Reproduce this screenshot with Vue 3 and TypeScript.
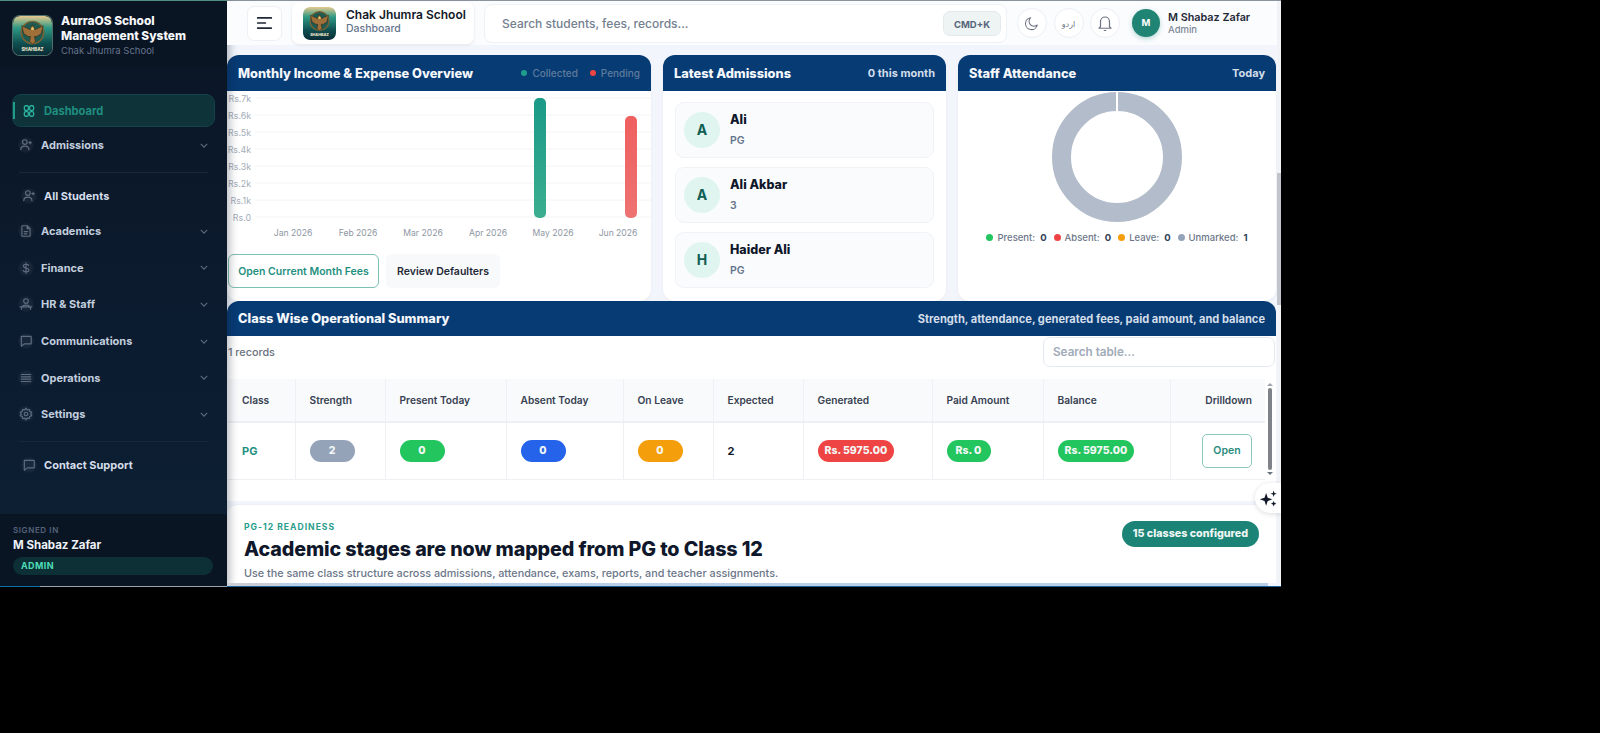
<script setup lang="ts">
interface NavItem {
  label: string
  icon: string
  sub?: boolean
  caret?: boolean
  divider?: boolean
}

const icons: Record<string, string> = {
  user: 'M10 11a4 4 0 1 0 0-8 4 4 0 0 0 0 8zM3 20c0-4 3-6 7-6s7 2 7 6M19 6v4M17 8h4',
  doc: 'M6 3h8l5 5v12a1 1 0 0 1-1 1H6a1 1 0 0 1-1-1V4a1 1 0 0 1 1-1zM14 3v5h5M9 13h6M9 17h4',
  dollar: 'M12 3v18M16.5 7.5c-.8-1.5-2.4-2-4.5-2-2.500 0-4.500 1.200-4.500 3.200 0 4.600 9.500 2.300 9.500 6.800 0 2-2.200 3.200-5 3.200-2.400 0-4.300-.8-5-2.500',
  staff: 'M12 11a4 4 0 1 0 0-8 4 4 0 0 0 0 8zM4 21c0-4 3-7 8-7s8 3 8 7M2 17h20',
  chat: 'M4 4h16a1 1 0 0 1 1 1v11a1 1 0 0 1-1 1H9l-5 4V5a1 1 0 0 1 0-1z',
  menu: 'M4 6h16M4 10h16M4 14h16M4 18h16',
  gear: 'M12 15a3 3 0 1 0 0-6 3 3 0 0 0 0 6zM12 2l2 3 3.500-.8 1 3.500 3.200 1.500-1.500 2.800 1.500 2.800-3.200 1.500-1 3.500L14 19l-2 3-2-3-3.500.8-1-3.500-3.200-1.500 1.500-2.800-1.500-2.800 3.200-1.500 1-3.500L10 5z',
}

const navItems: NavItem[] = [
  { label: 'Admissions', icon: 'user', caret: true, divider: true },
  { label: 'All Students', icon: 'user', sub: true },
  { label: 'Academics', icon: 'doc', caret: true },
  { label: 'Finance', icon: 'dollar', caret: true },
  { label: 'HR & Staff', icon: 'staff', caret: true },
  { label: 'Communications', icon: 'chat', caret: true },
  { label: 'Operations', icon: 'menu', caret: true },
  { label: 'Settings', icon: 'gear', caret: true, divider: true },
  { label: 'Contact Support', icon: 'chat', sub: true },
]

const yTicks = ['Rs.7k', 'Rs.6k', 'Rs.5k', 'Rs.4k', 'Rs.3k', 'Rs.2k', 'Rs.1k', 'Rs.0']
const months = ['Jan 2026', 'Feb 2026', 'Mar 2026', 'Apr 2026', 'May 2026', 'Jun 2026']

const admissions = [
  { initial: 'A', name: 'Ali', grade: 'PG' },
  { initial: 'A', name: 'Ali Akbar', grade: '3' },
  { initial: 'H', name: 'Haider Ali', grade: 'PG' },
]

const legend = [
  { label: 'Present:', value: 0, color: '#22c55e' },
  { label: 'Absent:', value: 0, color: '#ef4444' },
  { label: 'Leave:', value: 0, color: '#f59e0b' },
  { label: 'Unmarked:', value: 1, color: '#94a3b8' },
]

const columns = ['Class', 'Strength', 'Present Today', 'Absent Today', 'On Leave', 'Expected', 'Generated', 'Paid Amount', 'Balance', 'Drilldown']
</script>

<template>
  <div class="app">
    <aside class="sidebar">
      <div class="brand">
        <svg class="logo logo--big" viewBox="0 0 40 40">
          <defs>
            <linearGradient id="logoBg" x1="0" y1="0" x2="0" y2="1">
              <stop offset="0" stop-color="#e6c98f" />
              <stop offset="0.3" stop-color="#2f9a84" />
              <stop offset="0.7" stop-color="#0f4f50" />
              <stop offset="1" stop-color="#0a2b35" />
            </linearGradient>
          </defs>
          <rect width="40" height="40" rx="7" fill="url(#logoBg)" />
          <circle cx="20" cy="17" r="11.500" fill="#1f5b50" stroke="#7a6234" stroke-width="1.500" />
          <path d="M20 9l2.500 5 8.500-4-2 8-4.500 3-2.500 0 1 5-3 3-3-3 1-5-2.500 0-4.500-3-2-8 8.500 4z" fill="#a0703a" stroke="#3a2d1c" stroke-width=".7" />
          <circle cx="20" cy="13" r="1.500" fill="#e8c56a" />
          <text x="20" y="35.500" text-anchor="middle" class="logo-text">SHAHBAZ</text>
        </svg>
        <div class="brand-text">
          <div class="brand-title">AurraOS School<br />Management System</div>
          <div class="brand-sub">Chak Jhumra School</div>
        </div>
      </div>

      <nav class="nav">
        <a class="nav-active">
          <svg class="ic-active" viewBox="0 0 24 24" fill="none" stroke="currentColor" stroke-width="2.200">
            <rect x="4" y="3" width="7" height="8" rx="2.500" />
            <rect x="13" y="3" width="7" height="8" rx="2.500" />
            <rect x="4" y="13" width="7" height="8" rx="2.500" />
            <rect x="13" y="13" width="7" height="8" rx="2.500" />
          </svg>
          Dashboard
        </a>
        <template v-for="item in navItems" :key="item.label">
          <a :class="['nav-item', { 'nav-item--sub': item.sub }]">
            <span class="nav-ic">
              <svg viewBox="0 0 24 24" fill="none" stroke="currentColor" stroke-width="2" stroke-linecap="round" stroke-linejoin="round">
                <path :d="icons[item.icon]" />
              </svg>
            </span>
            <span class="nav-label">{{ item.label }}</span>
            <svg v-if="item.caret" class="caret" viewBox="0 0 10 6" fill="none" stroke="currentColor" stroke-width="1.400">
              <path d="M1 1l4 4 4-4" />
            </svg>
          </a>
          <div v-if="item.divider" class="nav-divider"></div>
        </template>
      </nav>

      <div class="signed">
        <div class="signed-cap">SIGNED IN</div>
        <div class="signed-name">M Shabaz Zafar</div>
        <div class="signed-role">ADMIN</div>
      </div>
    </aside>

    <div class="main">
      <header class="topbar">
        <button class="menu-btn">
          <svg viewBox="0 0 20 16" width="17" height="14" fill="none" stroke="#1f2937" stroke-width="2" stroke-linecap="round">
            <path d="M2 2h16M2 8h9M2 14h16" />
          </svg>
        </button>
        <div class="school">
          <svg class="logo logo--small" viewBox="0 0 40 40">
            <rect width="40" height="40" rx="7" fill="url(#logoBg)" />
            <circle cx="20" cy="17" r="11.500" fill="#1f5b50" stroke="#7a6234" stroke-width="1.500" />
            <path d="M20 9l2.500 5 8.500-4-2 8-4.500 3-2.500 0 1 5-3 3-3-3 1-5-2.500 0-4.500-3-2-8 8.500 4z" fill="#a0703a" stroke="#3a2d1c" stroke-width=".7" />
            <circle cx="20" cy="13" r="1.500" fill="#e8c56a" />
            <text x="20" y="35.500" text-anchor="middle" class="logo-text">SHAHBAZ</text>
          </svg>
          <div class="school-text">
            <div class="school-name">Chak Jhumra School</div>
            <div class="school-page">Dashboard</div>
          </div>
        </div>
        <div class="search">
          <span class="search-ph">Search students, fees, records...</span>
          <span class="kbd">CMD+K</span>
        </div>
        <button class="round">
          <svg viewBox="0 0 24 24" width="16" height="16" fill="none" stroke="#6b7280" stroke-width="1.600" stroke-linecap="round" stroke-linejoin="round">
            <path d="M20 15A9 9 0 1 1 10 4a7 7 0 0 0 10 11z" />
          </svg>
        </button>
        <button class="round round--lang">اردو</button>
        <button class="round">
          <svg viewBox="0 0 24 24" width="18" height="18" fill="none" stroke="#6b7280" stroke-width="1.600" stroke-linecap="round" stroke-linejoin="round">
            <path d="M6 17V10a6 6 0 0 1 12 0v7l2 2H4zM11 22h2" />
          </svg>
        </button>
        <div class="avatar">M</div>
        <div class="who">
          <div class="who-name">M Shabaz Zafar</div>
          <div class="who-role">Admin</div>
        </div>
      </header>

      <div class="content">
        <section class="top-grid">
          <div class="card">
            <div class="card-head card-head--tall">
              <span class="card-title">Monthly Income &amp; Expense Overview</span>
              <span class="chart-legend">
                <i class="dot dot--teal"></i><span>Collected</span>
                <i class="dot dot--red"></i><span>Pending</span>
              </span>
            </div>
            <svg class="chart" width="424" height="157" viewBox="0 0 424 157">
              <defs>
                <linearGradient id="barA" x1="0" y1="0" x2="0" y2="1">
                  <stop offset="0" stop-color="#1a9a88" />
                  <stop offset="1" stop-color="#3bae90" />
                </linearGradient>
                <linearGradient id="barB" x1="0" y1="0" x2="0" y2="1">
                  <stop offset="0" stop-color="#ef5f5f" />
                  <stop offset="1" stop-color="#ee7272" />
                </linearGradient>
              </defs>
              <g v-for="(tick, i) in yTicks" :key="tick">
                <line x1="28" x2="424" :y1="7 + i * 17" :y2="7 + i * 17" stroke="#f2f4f7" />
                <text x="24" :y="10.500 + i * 17" text-anchor="end" class="tick">{{ tick }}</text>
              </g>
              <text v-for="(month, i) in months" :key="month" :x="66 + i * 65" y="145" text-anchor="middle" class="tick tick--x">{{ month }}</text>
              <rect x="307" y="7" width="12" height="120" rx="5" fill="url(#barA)" />
              <rect x="398" y="25" width="12" height="102" rx="5" fill="url(#barB)" />
            </svg>
            <div class="chart-actions">
              <button class="btn btn--outline">Open Current Month Fees</button>
              <button class="btn btn--soft">Review Defaulters</button>
            </div>
          </div>

          <div class="card">
            <div class="card-head card-head--tall">
              <span class="card-title">Latest Admissions</span>
              <span class="card-note">0 this month</span>
            </div>
            <div class="adm-list">
              <div v-for="row in admissions" :key="row.name" class="adm-row">
                <div class="adm-avatar">{{ row.initial }}</div>
                <div>
                  <div class="adm-name">{{ row.name }}</div>
                  <div class="adm-grade">{{ row.grade }}</div>
                </div>
              </div>
            </div>
          </div>

          <div class="card">
            <div class="card-head card-head--tall">
              <span class="card-title">Staff Attendance</span>
              <span class="card-note">Today</span>
            </div>
            <div class="donut-wrap">
              <svg width="132" height="132" viewBox="0 0 132 132">
                <circle cx="66" cy="66" r="55.500" fill="none" stroke="#b3bccb" stroke-width="19" />
                <rect x="65" y="0" width="2" height="22" fill="#fff" />
              </svg>
            </div>
            <div class="att-legend">
              <span v-for="entry in legend" :key="entry.label" class="att-item">
                <i class="att-dot" :style="{ background: entry.color }"></i>
                <span>{{ entry.label }}</span>
                <b>{{ entry.value }}</b>
              </span>
            </div>
          </div>
        </section>

        <section class="summary">
          <div class="card-head card-head--wide">
            <span class="card-title">Class Wise Operational Summary</span>
            <span class="card-note card-note--long">Strength, attendance, generated fees, paid amount, and balance</span>
          </div>
          <div class="tools">
            <span class="records">1 records</span>
            <div class="tbl-search">Search table...</div>
          </div>
          <div class="table-wrap">
            <table class="table">
              <colgroup>
                <col style="width: 67px" />
                <col style="width: 90px" />
                <col style="width: 121px" />
                <col style="width: 117px" />
                <col style="width: 90px" />
                <col style="width: 90px" />
                <col style="width: 129px" />
                <col style="width: 111px" />
                <col style="width: 127px" />
                <col style="width: 95px" />
              </colgroup>
              <thead>
                <tr>
                  <th v-for="col in columns" :key="col">{{ col }}</th>
                </tr>
              </thead>
              <tbody>
                <tr>
                  <td class="cls">PG</td>
                  <td><span class="pill pill--count pill--slate">2</span></td>
                  <td><span class="pill pill--count pill--green">0</span></td>
                  <td><span class="pill pill--count pill--blue">0</span></td>
                  <td><span class="pill pill--count pill--amber">0</span></td>
                  <td class="num">2</td>
                  <td><span class="pill pill--red">Rs. 5975.00</span></td>
                  <td><span class="pill pill--green">Rs. 0</span></td>
                  <td><span class="pill pill--green">Rs. 5975.00</span></td>
                  <td class="drill"><button class="open-btn">Open</button></td>
                </tr>
              </tbody>
            </table>
            <div class="tbl-scroll">
              <i class="arrow arrow--up"></i>
              <i class="thumb"></i>
              <i class="arrow arrow--down"></i>
            </div>
          </div>
        </section>

        <section class="banner">
          <div>
            <div class="eyebrow">PG-12 READINESS</div>
            <h2 class="banner-title">Academic stages are now mapped from PG to Class 12</h2>
            <p class="banner-sub">Use the same class structure across admissions, attendance, exams, reports, and teacher assignments.</p>
          </div>
          <span class="banner-pill">15 classes configured</span>
        </section>
      </div>

      <button class="ai-btn">
        <svg viewBox="0 0 24 24" width="19" height="19" fill="#111827">
          <path d="M9 5l2 6 6 2-6 2-2 6-2-6-6-2 6-2zM18.500 2l1 3 3 1-3 1-1 3-1-3-3-1 3-1zM18.500 15l1 2.500 2.500 1-2.500 1-1 2.500-1-2.500-2.500-1 2.500-1z" />
        </svg>
      </button>
      <div class="page-scroll"><i></i></div>
      <div class="bottom-bar"></div>
    </div>
  </div>
</template>

<style>
html,
body {
  margin: 0;
  background: #000;
}
</style>

<style scoped>
.app {
  display: flex;
  width: 1281px;
  height: 587px;
  overflow: hidden;
  position: relative;
  font-family: Inter, "Noto Sans", sans-serif;
  color: #111827;
}

/* sidebar */
.sidebar {
  width: 227px;
  flex: none;
  display: flex;
  flex-direction: column;
  background: linear-gradient(180deg, #0a1524 0%, #0c1c30 60%, #0c2034 100%);
  border-top: 1px solid #4f8f84;
  box-sizing: border-box;
  box-shadow: 3px 0 8px rgba(15, 23, 42, 0.28);
  position: relative;
  z-index: 1;
}

.sidebar::after {
  content: "";
  height: 1px;
  background: linear-gradient(90deg, #0e6fb0 40px, #9aa5b0 40px);
}

.brand {
  display: flex;
  gap: 9px;
  height: 67px;
  padding: 15px 13px 0;
  box-sizing: border-box;
  background: #0a1524;
}

.logo {
  flex: none;
  border-radius: 7px;
}

.logo--big {
  width: 39px;
  height: 39px;
  box-shadow: 0 0 0 1px #50706c;
}

.logo--small {
  width: 33px;
  height: 33px;
}

.logo-text {
  font-size: 4.500px;
  font-weight: 800;
  fill: #f2e6c8;
}

.brand-text {
  margin-top: -3px;
}

.brand-title {
  font-size: 11.900px;
  line-height: 15px;
  font-weight: 800;
  color: #f5f7fa;
}

.brand-sub {
  margin-top: 1px;
  font-size: 9.500px;
  line-height: 13px;
  color: #65748a;
}

.nav {
  padding: 26px 12px 0;
  flex: 1;
}

.nav-active {
  display: flex;
  align-items: center;
  height: 33px;
  gap: 8px;
  padding-left: 9px;
  box-sizing: border-box;
  border-radius: 9px;
  background: #0e3338;
  border: 1px solid #14444a;
  font-size: 11.100px;
  font-weight: 700;
  color: #1f8f80;
  position: relative;
}

.nav-active::before {
  content: "";
  position: absolute;
  left: 0;
  top: 7px;
  bottom: 7px;
  width: 2px;
  background: #1f9d8a;
}

.ic-active {
  width: 14px;
  height: 14px;
  color: #2bb5a0;
}

.nav-item {
  display: flex;
  align-items: center;
  height: 36.700px;
  padding-left: 7px;
  font-size: 11px;
  font-weight: 700;
  color: #c2cede;
}

.nav-item--sub {
  height: 34px;
  padding-left: 10px;
  color: #d5deea;
}

.nav-item--sub:last-child {
  margin-top: 2px;
}

.nav-ic {
  display: flex;
  align-items: center;
  justify-content: center;
  width: 14px;
  height: 14px;
  margin-right: 8px;
  color: #5d6c80;
  border-radius: 50%;
  background: rgba(255, 255, 255, 0.05);
  box-shadow: 0 0 0 1px rgba(255, 255, 255, 0.03);
}

.nav-ic svg {
  width: 14px;
  height: 14px;
}

.nav-label {
  flex: 1;
}

.caret {
  width: 8px;
  height: 5px;
  margin-right: 7px;
  color: #5c6b7e;
}

.nav-divider {
  height: 1px;
  margin: 8px 7px 6px;
  background: #15283c;
}

.signed {
  height: 72px;
  padding: 11px 13px 0;
  box-sizing: border-box;
  background: #0a1524;
}

.signed-cap {
  font-size: 8px;
  line-height: 11px;
  font-weight: 600;
  letter-spacing: 0.6px;
  color: #55637a;
}

.signed-name {
  font-size: 11.500px;
  line-height: 17px;
  font-weight: 700;
  color: #eef2f7;
  margin-top: 1px;
}

.signed-role {
  height: 18px;
  margin-top: 3px;
  padding-left: 8px;
  width: 200px;
  box-sizing: border-box;
  border-radius: 9px;
  background: #0c3035;
  font-size: 9px;
  line-height: 18px;
  font-weight: 700;
  letter-spacing: 0.4px;
  color: #4fdcb7;
}

/* main column */
.main {
  flex: 1;
  display: flex;
  flex-direction: column;
  min-width: 0;
  position: relative;
  background: #f2f6fc;
  border-top: 1px solid #8b949e;
  box-sizing: border-box;
}

.topbar {
  flex: none;
  height: 44px;
  display: flex;
  align-items: center;
  padding-left: 20px;
  box-sizing: border-box;
  background: #fbfcfe;
  position: relative;
  z-index: 2;
}

.menu-btn {
  width: 35px;
  height: 35px;
  flex: none;
  display: flex;
  align-items: center;
  justify-content: center;
  padding: 0;
  border: 1px solid #eef0f4;
  border-radius: 7px;
  background: #fff;
}

.school {
  display: flex;
  align-items: center;
  gap: 10px;
  width: 182px;
  height: 42px;
  flex: none;
  margin-left: 10px;
  padding-left: 11px;
  box-sizing: border-box;
  background: #fff;
  border-radius: 7px;
  box-shadow: 0 1px 3px rgba(15, 23, 42, 0.1);
}

.school-text {
  margin-top: -3px;
}

.school-name {
  font-size: 12px;
  line-height: 15px;
  font-weight: 600;
  color: #111827;
}

.school-page {
  font-size: 10.500px;
  line-height: 14px;
  font-weight: 500;
  color: #64748b;
}

.search {
  width: 523px;
  height: 39px;
  flex: none;
  margin-left: 10px;
  display: flex;
  align-items: center;
  justify-content: space-between;
  padding: 0 5px 0 17px;
  box-sizing: border-box;
  background: #fff;
  border: 1px solid #eef1f5;
  border-radius: 8px;
}

.search-ph {
  font-size: 12px;
  font-weight: 500;
  color: #74808f;
}

.kbd {
  width: 58px;
  height: 25px;
  text-align: center;
  font-size: 9.500px;
  line-height: 25px;
  font-weight: 700;
  color: #55657a;
  background: #eef3f4;
  border: 1px solid #e4eaec;
  box-sizing: border-box;
  border-radius: 7px;
}

.round {
  width: 30px;
  height: 30px;
  flex: none;
  margin-left: 6.500px;
  padding: 0;
  display: flex;
  align-items: center;
  justify-content: center;
  border: 1px solid #eceff3;
  border-radius: 50%;
  background: #fff;
}

.search + .round {
  margin-left: 10px;
}

.round--lang {
  font-family: "Noto Sans", "DejaVu Sans", sans-serif;
  font-size: 8px;
  color: #6b7280;
}

.avatar {
  width: 28px;
  height: 28px;
  flex: none;
  margin-left: 12px;
  border-radius: 50%;
  background: #1f8473;
  color: #fff;
  font-size: 9.500px;
  font-weight: 700;
  line-height: 28px;
  text-align: center;
  box-shadow: 0 2px 5px rgba(31, 132, 115, 0.3);
}

.who {
  margin-left: 8px;
}

.who-name {
  font-size: 10.800px;
  line-height: 13px;
  font-weight: 600;
  color: #1f2937;
}

.who-role {
  font-size: 9.500px;
  line-height: 12px;
  font-weight: 500;
  color: #7b8794;
}

.content {
  flex: 1;
  min-height: 0;
  padding: 10px 5px 0 0;
}

.top-grid {
  display: grid;
  grid-template-columns: 424px 283px 318px;
  gap: 12px;
  height: 246px;
}

.card {
  background: #fff;
  border-radius: 12px;
  overflow: hidden;
  box-shadow: 0 1px 3px rgba(15, 23, 42, 0.05);
}

.card-head {
  height: 35px;
  display: flex;
  align-items: center;
  justify-content: space-between;
  padding: 0 11px;
  background: #073b74;
  color: #fff;
}

.card-head--tall {
  height: 36px;
}

.card-head--wide {
  border-radius: 12px 12px 0 0;
}

.card-title {
  font-size: 12.800px;
  font-weight: 800;
  color: #f4f7fb;
}

.card-note {
  font-size: 11px;
  font-weight: 700;
  color: #d3deea;
}

.card-note--long {
  font-size: 11.100px;
}

.chart-legend {
  display: flex;
  align-items: center;
  font-size: 10px;
  font-weight: 500;
  color: #5f7c9c;
}

.dot {
  width: 6px;
  height: 6px;
  border-radius: 50%;
  margin-right: 5px;
}

.dot--teal {
  background: #1f9d8a;
}

.dot--red {
  margin-left: 12px;
  background: #ef4444;
}

.chart {
  display: block;
}

.tick {
  font-family: Inter, sans-serif;
  font-size: 8.800px;
  fill: #a3acb8;
}

.tick--x {
  font-size: 8.600px;
  fill: #8d96a3;
}

.chart-actions {
  display: flex;
  gap: 7px;
  padding: 6px 0 0 1px;
}

.btn {
  height: 34px;
  box-sizing: border-box;
  border-radius: 6px;
  font-family: inherit;
  font-size: 10.500px;
  font-weight: 600;
  padding: 0;
}

.btn--outline {
  width: 151px;
  background: #fff;
  border: 1px solid #7cbfb4;
  color: #1f8f80;
}

.btn--soft {
  width: 114px;
  background: #f8f9fb;
  border: 0;
  color: #1f2937;
}

.adm-list {
  display: flex;
  flex-direction: column;
  gap: 9px;
  padding: 11px 12px 0;
}

.adm-row {
  height: 56px;
  display: flex;
  align-items: center;
  gap: 10px;
  padding-left: 8px;
  box-sizing: border-box;
  background: #fafbfd;
  border: 1px solid #f0f2f6;
  border-radius: 9px;
}

.adm-avatar {
  width: 36px;
  height: 36px;
  border-radius: 50%;
  background: #e0f5f0;
  color: #0f5e54;
  font-size: 14px;
  font-weight: 700;
  line-height: 36px;
  text-align: center;
}

.adm-name {
  font-size: 12.500px;
  line-height: 21px;
  font-weight: 800;
  color: #0f172a;
}

.adm-grade {
  font-size: 10.500px;
  line-height: 21px;
  font-weight: 600;
  color: #64748b;
}

.donut-wrap {
  display: flex;
  justify-content: center;
}

.donut-wrap svg {
  display: block;
}

.att-legend {
  display: flex;
  justify-content: center;
  gap: 7px;
  margin-top: 9px;
  font-size: 9.500px;
  font-weight: 500;
  color: #6b7688;
}

.att-item {
  display: flex;
  align-items: center;
  gap: 3px;
}

.att-item b {
  margin-left: 2px;
  color: #334155;
  font-weight: 700;
}

.att-dot {
  width: 7px;
  height: 7px;
  border-radius: 50%;
  margin-right: 1px;
}

.summary {
  height: 200px;
  background: #fff;
  border-radius: 12px 12px 0 0;
}

.tools {
  height: 30px;
  margin-top: 1px;
  display: flex;
  align-items: center;
  justify-content: space-between;
  padding-right: 1px;
}

.records {
  padding-left: 1px;
  font-size: 10.800px;
  font-weight: 500;
  color: #6b7280;
}

.tbl-search {
  width: 232px;
  height: 30px;
  box-sizing: border-box;
  padding-left: 9px;
  border: 1px solid #e4e9f0;
  border-radius: 7px;
  font-size: 11.700px;
  line-height: 28px;
  font-weight: 600;
  color: #a0aab8;
  background: #fff;
}

.table-wrap {
  display: flex;
  margin: 12px 0 0 1px;
}

.table {
  width: 1037px;
  table-layout: fixed;
  border-collapse: collapse;
  background: #fff;
}

.table th {
  height: 43px;
  padding: 0 0 0 14px;
  box-sizing: border-box;
  text-align: left;
  font-size: 10.200px;
  font-weight: 600;
  color: #374151;
  background: #f9fafc;
  border-right: 1px solid #eef0f4;
  border-bottom: 2px solid #eceff3;
}

.table th:last-child {
  border-right: 0;
  text-align: right;
  padding-right: 13px;
}

.table td {
  height: 57px;
  padding: 0 0 0 14px;
  box-sizing: border-box;
  border-right: 1px solid #eef0f4;
  border-bottom: 1px solid #eef0f4;
  font-size: 11px;
}

.table td:last-child {
  border-right: 0;
}

.cls {
  font-weight: 700;
  color: #1f8f80;
}

.num {
  font-weight: 700;
  color: #111827;
}

.pill {
  display: inline-block;
  height: 22px;
  padding: 0 7px;
  box-sizing: border-box;
  border-radius: 11px;
  font-size: 10.500px;
  line-height: 22px;
  font-weight: 800;
  color: #f3f7f5;
  text-align: center;
  vertical-align: middle;
}

.pill--count {
  width: 45px;
  padding: 0;
}

.pill--slate {
  background: #94a3b8;
}

.pill--green {
  background: #22c55e;
  min-width: 44px;
}

.pill--blue {
  background: #2563eb;
}

.pill--amber {
  background: #f59e0b;
}

.pill--red {
  background: #ef4444;
}

.drill {
  text-align: right;
  padding-right: 13px !important;
}

.open-btn {
  width: 50px;
  height: 34px;
  padding: 0;
  background: #fff;
  border: 1px solid #8cc7bd;
  border-radius: 5px;
  font-family: inherit;
  font-size: 10.500px;
  font-weight: 600;
  color: #2b8b7e;
}

.tbl-scroll {
  width: 9px;
  height: 100px;
  display: flex;
  flex-direction: column;
  align-items: center;
  justify-content: space-between;
  padding: 4px 0;
  box-sizing: border-box;
}

.thumb {
  flex: 1;
  width: 4px;
  margin: 2px 0;
  border-radius: 2px;
  background: #7f8389;
}

.arrow {
  width: 0;
  height: 0;
  border-left: 3px solid transparent;
  border-right: 3px solid transparent;
}

.arrow--up {
  border-bottom: 3px solid #9ca3af;
}

.arrow--down {
  border-top: 3px solid #6b7280;
}

.banner {
  display: flex;
  justify-content: space-between;
  align-items: flex-start;
  height: 82px;
  margin-top: 3px;
  padding: 16px 17px 0;
  box-sizing: border-box;
  background: #fff;
  border-radius: 10px 10px 0 0;
  border-top: 1px solid #edf0f4;
}

.eyebrow {
  font-size: 8.600px;
  line-height: 12px;
  font-weight: 700;
  letter-spacing: 1px;
  color: #2a9d8c;
}

.banner-title {
  margin: 1px 0 0;
  font-size: 19.700px;
  line-height: 30px;
  font-weight: 800;
  color: #0f172a;
  letter-spacing: -0.1px;
}

.banner-sub {
  margin: 2px 0 0;
  font-size: 10.800px;
  line-height: 15px;
  font-weight: 500;
  color: #6b7688;
}

.banner-pill {
  height: 26px;
  padding: 0 11px;
  border-radius: 13px;
  background: #1c8476;
  color: #eef6f4;
  font-size: 10.700px;
  font-weight: 800;
  line-height: 26px;
}

.ai-btn {
  position: absolute;
  right: 0;
  top: 482px;
  width: 26px;
  height: 30px;
  display: flex;
  align-items: center;
  justify-content: center;
  padding: 0;
  border: 0;
  border-radius: 15px 0 0 15px;
  background: #fff;
  box-shadow: 0 1px 5px rgba(15, 23, 42, 0.15);
  z-index: 3;
}

.page-scroll {
  position: absolute;
  right: 0;
  top: 0;
  bottom: 0;
  width: 4px;
  background: #f1f3f6;
  z-index: 2;
}

.page-scroll i {
  display: block;
  margin-top: 172px;
  height: 132px;
  background: #c2c6cc;
}

.bottom-bar {
  position: absolute;
  left: 0;
  right: 0;
  bottom: 0;
  height: 3px;
  background: linear-gradient(90deg, #c9ced6 53px, #b9cfe8 53px, #b9cfe8 calc(100% - 13px), #f2f6fc calc(100% - 13px));
  border-bottom: 1px solid #1d5f98;
  z-index: 2;
}
</style>
